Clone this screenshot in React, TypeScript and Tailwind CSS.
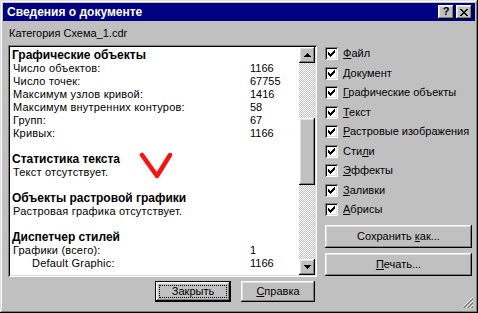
import React from "react";

// Win95-style bevels
const raised =
  "shadow-[inset_-1px_-1px_#000,inset_1px_1px_#fff,inset_-2px_-2px_#808080,inset_2px_2px_#dfdfdf]";
const sunken =
  "shadow-[inset_1px_1px_#808080,inset_-1px_-1px_#fff,inset_2px_2px_#000,inset_-2px_-2px_#dfdfdf]";
const checker =
  "bg-[repeating-conic-gradient(#c0c0c0_0_25%,#ffffff_0_50%)] bg-[length:2px_2px]";

const CHECKS: { pre: string; key: string; post: string }[] = [
  { pre: "", key: "Ф", post: "айл" },
  { pre: "", key: "Д", post: "окумент" },
  { pre: "", key: "Г", post: "рафические объекты" },
  { pre: "", key: "Т", post: "екст" },
  { pre: "", key: "Р", post: "астровые изображения" },
  { pre: "Сти", key: "л", post: "и" },
  { pre: "", key: "Э", post: "ффекты" },
  { pre: "", key: "З", post: "аливки" },
  { pre: "", key: "А", post: "брисы" },
];

type Row =
  | { kind: "head"; text: string }
  | { kind: "text"; text: string; value?: string; indent?: boolean }
  | { kind: "blank" };

const ROWS: Row[] = [
  { kind: "head", text: "Графические объекты" },
  { kind: "text", text: "Число объектов:", value: "1166" },
  { kind: "text", text: "Число точек:", value: "67755" },
  { kind: "text", text: "Максимум узлов кривой:", value: "1416" },
  { kind: "text", text: "Максимум внутренних контуров:", value: "58" },
  { kind: "text", text: "Групп:", value: "67" },
  { kind: "text", text: "Кривых:", value: "1166" },
  { kind: "blank" },
  { kind: "head", text: "Статистика текста" },
  { kind: "text", text: "Текст отсутствует." },
  { kind: "blank" },
  { kind: "head", text: "Объекты растровой графики" },
  { kind: "text", text: "Растровая графика отсутствует." },
  { kind: "blank" },
  { kind: "head", text: "Диспетчер стилей" },
  { kind: "text", text: "Графики (всего):", value: "1" },
  { kind: "text", text: "Default Graphic:", value: "1166", indent: true },
];

function CheckBox() {
  return (
    <div className={`w-[13px] h-[13px] bg-white shrink-0 ${sunken}`}>
      <svg width="13" height="13" viewBox="0 0 13 13" shapeRendering="crispEdges">
        <path
          d="M3 5h1v3H3zM4 6h1v3H4zM5 7h1v3H5zM6 6h1v3H6zM7 5h1v3H7zM8 4h1v3H8zM9 3h1v3H9z"
          fill="#000"
        />
      </svg>
    </div>
  );
}

function Arrow({ up }: { up?: boolean }) {
  return (
    <div className={`w-[16px] h-[16px] bg-[#c0c0c0] flex items-center justify-center ${raised}`}>
      <svg width="7" height="4" viewBox="0 0 7 4" shapeRendering="crispEdges">
        {up ? (
          <path d="M3 0h1v1h1v1h1v1h1v1H0V3h1V2h1V1h1z" fill="#000" />
        ) : (
          <path d="M0 0h7v1H6v1H5v1H4v1H3V3H2V2H1V1H0z" fill="#000" />
        )}
      </svg>
    </div>
  );
}

export default function App() {
  return (
    <div
      className={`relative w-[478px] h-[313px] bg-[#c0c0c0] p-[3px] flex flex-col text-[11px] text-black font-['Liberation_Sans',Arial,sans-serif] shadow-[inset_-1px_-1px_#000,inset_1px_1px_#dfdfdf,inset_-2px_-2px_#808080,inset_2px_2px_#fff]`}
    >
      {/* Title bar */}
      <div className="h-[18px] bg-[#000080] flex items-center pl-[4px] pr-[3px] shrink-0">
        <span className="text-white font-bold text-[12px] leading-none">Сведения о документе</span>
        <div className="ml-auto flex gap-[2px]">
          <div className={`w-[16px] h-[14px] bg-[#c0c0c0] flex items-center justify-center ${raised}`}>
            <span className="font-bold text-[11px] leading-none -mt-[1px]">?</span>
          </div>
          <div className={`w-[16px] h-[14px] bg-[#c0c0c0] flex items-center justify-center ${raised}`}>
            <svg width="8" height="7" viewBox="0 0 8 7" shapeRendering="crispEdges">
              <path
                d="M0 0h2v1h1v1h2V1h1V0h2v1H7v1H6v1H5v1h1v1h1v1h1v1H6V6H5V5H3v1H2v1H0V6h1V5h1V4h1V3H2V2H1V1H0z"
                fill="#000"
              />
            </svg>
          </div>
        </div>
      </div>

      <div className="flex flex-1">
        {/* Left column */}
        <div className="w-[314px] pl-[5px] flex flex-col">
          <div className="mt-[6px] h-[13px] leading-[13px] pl-[1px]">Категория Схема_1.cdr</div>

          <div className={`relative mt-[5px] h-[232px] w-[309px] bg-white p-[2px] flex ${sunken}`}>
            <div className="flex-1 overflow-hidden pt-[2px] pl-[3px]">
              {ROWS.map((r, i) =>
                r.kind === "blank" ? (
                  <div key={i} className="h-[13px]" />
                ) : r.kind === "head" ? (
                  <div key={i} className="h-[13px] leading-[13px] font-bold text-[12px] -ml-[1px]">
                    {r.text}
                  </div>
                ) : (
                  <div key={i} className="h-[13px] leading-[13px] flex">
                    <span className={`w-[237px] tracking-[0.2px] ${r.indent ? "pl-[19px]" : ""}`}>
                      {r.text}
                    </span>
                    <span>{r.value}</span>
                  </div>
                )
              )}
            </div>
            {/* Scrollbar */}
            <div className={`w-[16px] flex flex-col ${checker}`}>
              <Arrow up />
              <div className="h-[55px]" />
              <div className={`h-[67px] bg-[#c0c0c0] ${raised}`} />
              <div className="flex-1" />
              <Arrow />
            </div>
            {/* red mark */}
            <svg
              className="absolute left-[131px] top-[107px]"
              width="36"
              height="30"
              viewBox="0 0 36 30"
            >
              <path
                d="M3 3 L18 24 L31 3"
                fill="none"
                stroke="#ff1010"
                strokeWidth="4.5"
                strokeLinecap="round"
                strokeLinejoin="round"
              />
            </svg>
          </div>

          <div className="mt-[4px] flex gap-[10px] pl-[147px]">
            <div className="w-[76px] h-[21px] border border-black">
              <div className={`w-full h-full flex items-center justify-center p-[3px] ${raised}`}>
                <div className="w-full h-full border border-dotted border-black flex items-center justify-center leading-none">
                  Закрыть
                </div>
              </div>
            </div>
            <div className={`w-[74px] h-[21px] flex items-center justify-center ${raised}`}>
              <span>
                <span className="underline">С</span>правка
              </span>
            </div>
          </div>
        </div>

        {/* Right column */}
        <div className="flex-1 pl-[8px] pr-[3px] flex flex-col">
          <div className="mt-[26px] flex flex-col gap-[6.5px]">
            {CHECKS.map((c, i) => (
              <div key={i} className="h-[13px] flex items-center gap-[5px]">
                <CheckBox />
                <span className="leading-[13px]">
                  {c.pre}
                  <span className="underline underline-offset-[1px]">{c.key}</span>
                  {c.post}
                </span>
              </div>
            ))}
          </div>
          <div className={`mt-[9px] h-[23px] w-[147px] flex items-center justify-center ${raised}`}>
            <span>
              Сохранить <span className="underline">к</span>ак...
            </span>
          </div>
          <div className={`mt-[5px] h-[23px] w-[147px] flex items-center justify-center ${raised}`}>
            <span>
              <span className="underline">П</span>ечать...
            </span>
          </div>
        </div>
      </div>

      {/* Resize grip */}
      <svg
        className="absolute right-[4px] bottom-[4px]"
        width="12"
        height="12"
        viewBox="0 0 12 12"
        shapeRendering="crispEdges"
      >
        <path d="M11 0 L0 11 M11 4 L4 11 M11 8 L8 11" stroke="#fff" strokeWidth="1" />
        <path d="M11 1 L1 11 M11 2 L2 11 M11 5 L5 11 M11 6 L6 11 M11 9 L9 11 M11 10 L10 11" stroke="#808080" strokeWidth="1" />
      </svg>
    </div>
  );
}
